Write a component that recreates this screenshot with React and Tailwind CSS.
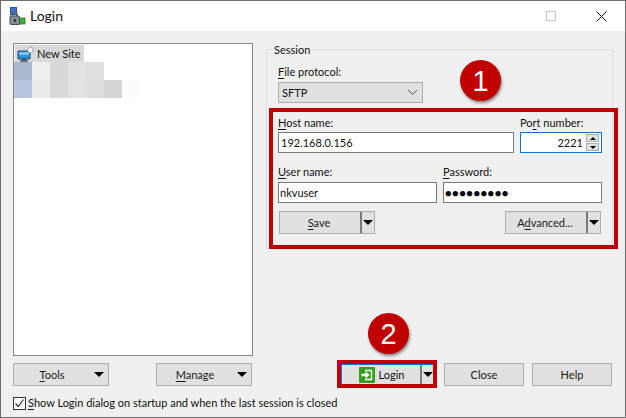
const font = { fontFamily: 'Lato, "Noto Sans", sans-serif' };

function Caret() {
  return <span className="w-0 h-0 border-l-[5px] border-r-[5px] border-t-[5px] border-l-transparent border-r-transparent border-t-black" />;
}

function U({ children }) {
  return <span className="underline underline-offset-[2px] decoration-1">{children}</span>;
}

function SplitButton({ width, children }) {
  return (
    <div className={`${width} h-[23px] bg-[#e1e1e1] border border-[#adadad] flex items-center`}>
      <span className="flex-1 text-center pr-[2px] text-[#1a1a1a]">{children}</span>
      <span className="w-[2px] h-[21px] bg-[#7a7a7a]" />
      <span className="w-[12px] flex justify-center"><Caret /></span>
    </div>
  );
}

function MenuButton({ children }) {
  return (
    <div className="w-[96px] h-[23px] bg-[#e1e1e1] border border-[#adadad] flex items-center">
      <span className="flex-1 text-center text-[#1a1a1a]">{children}</span>
      <span className="pr-[4px] pl-[4px] flex"><Caret /></span>
    </div>
  );
}

function PlainButton({ children }) {
  return (
    <div className="w-[80px] h-[23px] bg-[#e1e1e1] border border-[#adadad] flex items-center justify-center text-[#1a1a1a]">{children}</div>
  );
}

function Input({ width, children, extra = "border-[#7a7a7a]" }) {
  return (
    <div className={`${width} h-[21px] bg-white border flex items-center ${extra}`}>{children}</div>
  );
}

function Badge({ n, pos }) {
  return (
    <div className={`absolute ${pos} w-[41px] h-[41px] rounded-full bg-[#c00000] shadow-[1px_2px_3px_rgba(0,0,0,0.45)] flex items-center justify-center text-white text-[29px]`}
      style={{ fontFamily: '"Liberation Sans", sans-serif' }}>{n}</div>
  );
}

function SiteIcon() {
  return (
    <svg width="18" height="16" viewBox="0 0 18 16" className="shrink-0">
      <rect x="1" y="5" width="12" height="8" rx="0.5" fill="#2f8fdc" stroke="#27415f" />
      <rect x="2" y="6" width="10" height="3" fill="#7cc2f2" />
      <rect x="5" y="13" width="4" height="1.5" fill="#27415f" />
      <rect x="3" y="14.5" width="8" height="1.2" fill="#27415f" />
      <circle cx="13.5" cy="4" r="2.6" fill="#fff" stroke="#9fb0c4" />
      <path d="M13.5 0v1.5M17.5 4H16M16.4 1.2 15.3 2.3" stroke="#9fb0c4" strokeWidth="1" />
    </svg>
  );
}

function TitleIcon() {
  return (
    <svg width="18" height="19" viewBox="0 0 18 19" className="shrink-0">
      <rect x="1.5" y="0.5" width="6" height="7" fill="#3b78d8" stroke="#28509a" />
      <path d="M7 7 L10 11 H16 V17 H8 V11 Z" fill="#43b02a" stroke="#22771a" strokeWidth="0.8" />
      <path d="M3.5 9 V7.3 a2.3 2.3 0 0 1 4.6 0 V9" fill="none" stroke="#55606c" strokeWidth="1.3" />
      <rect x="1" y="9" width="9.5" height="8.5" rx="0.8" fill="#838d99" stroke="#47505a" />
      <rect x="5" y="12" width="1.6" height="3" fill="#222" />
    </svg>
  );
}

function LoginIcon() {
  return (
    <svg width="16" height="16" viewBox="0 0 16 16" className="shrink-0">
      <rect x="0" y="0" width="16" height="16" rx="1" fill="#3a9d23" />
      <path d="M6 3.5 H12.5 V12.5 H6" fill="none" stroke="#fff" strokeWidth="1.3" />
      <path d="M2.5 6.7 H6.5 V4.3 L10.5 8 L6.5 11.7 V9.3 H2.5 Z" fill="#fff" />
    </svg>
  );
}

const row1 = ["#a9b9d0", "#eeeeee", "#d8d8d8", "#e2e2e2", "#e0e0e0"];
const row2 = ["#b7c7e0", "#ebebeb", "#d9d9d9", "#e3e3e3", "#dedede", "#d6d5d5", "#fcfcfc"];

function Mosaic({ colors }) {
  return (
    <div className="flex h-[18px]">
      {colors.map((c, i) => <div key={i} className="w-[18px] h-[18px]" style={{ backgroundColor: c }} />)}
    </div>
  );
}

export default function App() {
  return (
    <div className="relative w-[626px] h-[418px] bg-[#f0f0f0] border border-[#6d6d6d] text-[11px] leading-[16px] text-[#111] flex flex-col overflow-hidden" style={font}>
      {/* title bar */}
      <div className="h-[30px] bg-white flex items-center shrink-0">
        <div className="ml-[8px] mr-[3px] flex"><TitleIcon /></div>
        <span className="text-[14px] flex-1">Login</span>
        <span className="w-[10px] h-[10px] border border-[#c4c4c4] mr-[40px]" />
        <svg width="11" height="11" viewBox="0 0 11 11" className="mr-[18px]"><path d="M0.5 0.5 10.5 10.5M10.5 0.5 0.5 10.5" stroke="#111" strokeWidth="1" /></svg>
      </div>

      <div className="flex pl-[12px] pt-[12px]">
        {/* left column */}
        <div className="w-[240px] shrink-0 flex flex-col">
          <div className="h-[313px] bg-white border border-[#828790] pt-[1px] flex flex-col">
            <div className="ml-[1px] w-[69px] h-[17px] bg-[#d9d9d9] flex items-center gap-[2px] pl-[2px] whitespace-nowrap">
              <SiteIcon />
              <span>New Site</span>
            </div>
            <Mosaic colors={row1} />
            <Mosaic colors={row2} />
          </div>
          <div className="flex justify-between pr-[1px] mt-[7px]">
            <MenuButton><U>T</U>ools</MenuButton>
            <MenuButton><U>M</U>anage</MenuButton>
          </div>
          <div className="flex items-center mt-[9px] w-[340px]">
            <span className="w-[13px] h-[13px] bg-white border border-[#333] flex items-center justify-center shrink-0">
              <svg width="11" height="11" viewBox="0 0 11 11"><path d="M1.5 5.5 4.2 8.5 9.5 1.5" fill="none" stroke="#333" strokeWidth="1.2" /></svg>
            </span>
            <span className="ml-[2px] whitespace-nowrap"><U>S</U>how Login dialog on startup and when the last session is closed</span>
          </div>
        </div>

        {/* right column */}
        <div className="ml-[13px] w-[347px] shrink-0 flex flex-col">
          <div className="mt-[6px] h-[200px] border border-[#dcdcdc] relative">
            <span className="absolute left-[6px] -top-[8px] bg-[#f0f0f0] px-[1px]">Session</span>
            <div className="pl-[11px] pt-[14px]">
              <div className="h-[18px]"><U>F</U>ile protocol:</div>
              <div className="w-[145px] h-[21px] bg-[#e1e1e1] border border-[#adadad] flex items-center justify-between pl-[3px] pr-[3px]">
                <span>SFTP</span>
                <svg width="11" height="7" viewBox="0 0 11 7" className="mr-[1px]"><path d="M1 1 5.5 5.5 10 1" fill="none" stroke="#555" strokeWidth="1" /></svg>
              </div>
            </div>
            <div className="ml-[2px] -mr-[6px] mt-[5px] h-[141px] border-[4px] border-[#c00000] pl-[5px] pr-[12px] pt-[1px] flex flex-col">
              <div className="flex justify-between h-[19px] w-[324px] items-end pb-[1px]">
                <span><U>H</U>ost name:</span>
                <span className="w-[82px]">Po<U>r</U>t number:</span>
              </div>
              <div className="flex justify-between w-[324px]">
                <Input width="w-[236px]"><span className="pl-[2px]">192.168.0.156</span></Input>
                <Input width="w-[82px]" extra="border-[#0078d7] justify-end pr-[2px] gap-[3px]">
                  <span>2221</span>
                  <span className="flex flex-col gap-[1px]">
                    <span className="w-[13px] h-[8px] bg-[#e1e1e1] border border-[#adadad] flex items-center justify-center">
                      <span className="w-0 h-0 border-l-[3px] border-r-[3px] border-b-[3px] border-l-transparent border-r-transparent border-b-black" />
                    </span>
                    <span className="w-[13px] h-[8px] bg-[#e1e1e1] border border-[#adadad] flex items-center justify-center">
                      <span className="w-0 h-0 border-l-[3px] border-r-[3px] border-t-[3px] border-l-transparent border-r-transparent border-t-black" />
                    </span>
                  </span>
                </Input>
              </div>
              <div className="flex h-[29px] w-[324px] items-end pb-[2px]">
                <span className="w-[165px]"><U>U</U>ser name:</span>
                <span><U>P</U>assword:</span>
              </div>
              <div className="flex justify-between w-[324px]">
                <Input width="w-[159px]"><span className="pl-[1px]">nkvuser</span></Input>
                <Input width="w-[159px]"><span className="pl-[1px] text-[11px] tracking-[0.5px] text-black">●●●●●●●●●</span></Input>
              </div>
              <div className="flex justify-between w-[322px] ml-[1px] mt-[8px]">
                <SplitButton width="w-[96px]"><U>S</U>ave</SplitButton>
                <SplitButton width="w-[96px]">A<U>d</U>vanced...</SplitButton>
              </div>
            </div>
          </div>
        </div>
      </div>

      {/* bottom-right buttons sit on the same row as Tools / Manage */}
      <div className="absolute left-[336px] top-[359px] flex items-start">
        <div className="w-[100px] h-[28px] border-[4px] border-[#c00000]">
          <div className="h-[20px] bg-[#e1e1e1] border-t border-l border-[#0078d7] flex items-center">
            <div className="flex-1 flex items-center justify-center gap-[4px] pl-[1px]">
              <LoginIcon />
              <span>Login</span>
            </div>
            <span className="w-[2px] h-[19px] bg-[#7a7a7a]" />
            <span className="w-[11px] flex justify-center"><Caret /></span>
          </div>
        </div>
        <div className="flex gap-[8px] ml-[7px] mt-[3px]">
          <PlainButton>Close</PlainButton>
          <PlainButton>Help</PlainButton>
        </div>
      </div>

      <Badge n="1" pos="left-[459px] top-[59px]" />
      <Badge n="2" pos="left-[367px] top-[312px]" />
    </div>
  );
}
